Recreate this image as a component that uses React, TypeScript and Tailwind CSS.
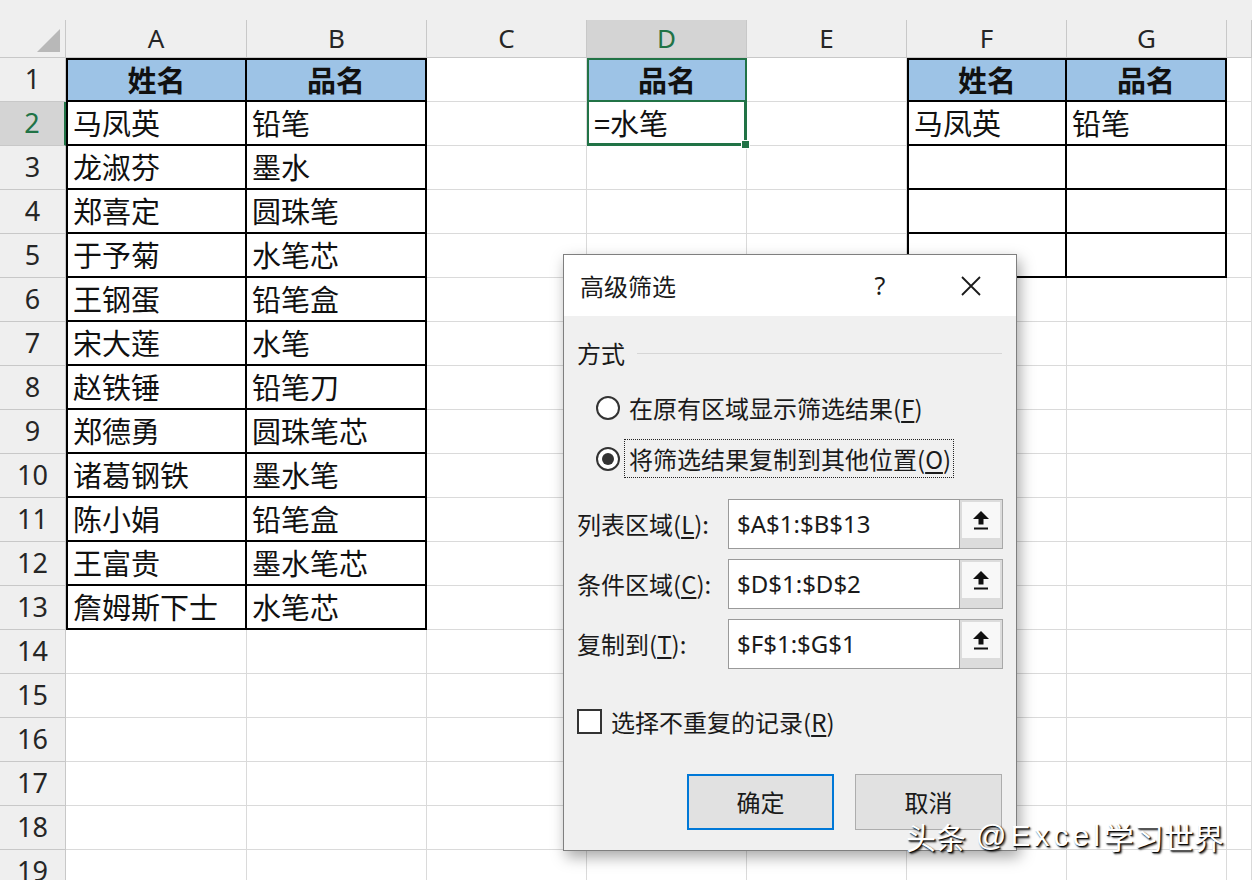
import React from 'react';

const names = ['马凤英', '龙淑芬', '郑喜定', '于予菊', '王钢蛋', '宋大莲', '赵铁锤', '郑德勇', '诸葛钢铁', '陈小娟', '王富贵', '詹姆斯下士'];
const items = ['铅笔', '墨水', '圆珠笔', '水笔芯', '铅笔盒', '水笔', '铅笔刀', '圆珠笔芯', '墨水笔', '铅笔盒', '墨水笔芯', '水笔芯'];
const LETTERS = ['A', 'B', 'C', 'D', 'E', 'F', 'G', 'H'];
const ROWS = Array.from({ length: 19 }, (_, i) => i + 1);

function getText(r: number, c: number): string {
  if (c === 0) {
    if (r === 1) return '姓名';
    if (r <= 13) return names[r - 2];
  }
  if (c === 1) {
    if (r === 1) return '品名';
    if (r <= 13) return items[r - 2];
  }
  if (c === 3) {
    if (r === 1) return '品名';
    if (r === 2) return '=水笔';
  }
  if (c === 5) {
    if (r === 1) return '姓名';
    if (r === 2) return '马凤英';
  }
  if (c === 6) {
    if (r === 1) return '品名';
    if (r === 2) return '铅笔';
  }
  return '';
}

function cellClass(r: number, c: number): string {
  const ab = r <= 13 && (c === 0 || c === 1);
  const fg = r <= 5 && (c === 5 || c === 6);
  if (c === 3 && r === 1) return 'border-2 border-[#217346] bg-[#9dc3e6]';
  if (c === 3 && r === 2) return 'border-l-2 border-r-[3px] border-b-[3px] border-[#217346] bg-white relative';
  if (ab || fg) {
    const left = c === 0 || c === 5;
    if (r === 1) {
      return left ? 'border-2 border-black bg-[#9dc3e6]' : 'border-t-2 border-r-2 border-b-2 border-black bg-[#9dc3e6]';
    }
    return left ? 'border-l-2 border-r-2 border-b-2 border-black bg-white' : 'border-r-2 border-b-2 border-black bg-white';
  }
  return 'border-r border-b border-[#dadada] bg-white';
}

function UploadIcon() {
  return (
    <svg width="18" height="21" viewBox="0 0 18 21">
      <polygon points="9,1 1,9 6.5,9 6.5,14.5 11.5,14.5 11.5,9 17,9" fill="#111" />
      <rect x="2" y="17.5" width="14" height="2" fill="#111" />
    </svg>
  );
}

function RangeRow({ label, acc, value }: { label: string; acc: string; value: string }) {
  return (
    <div className="flex items-center h-[50px]">
      <div className="w-[151px] text-[24px] text-[#1a1a1a]">
        {label}(<span className="underline underline-offset-[3px]">{acc}</span>):
      </div>
      <div className="flex h-full">
        <div className="w-[232px] h-full bg-white border border-[#9a9a9a] flex items-center pl-[8px] text-[24px] text-[#1a1a1a] font-['Noto_Sans',sans-serif]">
          {value}
        </div>
        <div className="w-[43px] h-full border border-l-0 border-[#a8a8a8] bg-[#dcdcdc] flex flex-col">
          <div className="h-[36px] mx-[2px] mt-[2px] bg-[#f8f8f8] flex items-center justify-center">
            <UploadIcon />
          </div>
        </div>
      </div>
    </div>
  );
}

function Dialog() {
  return (
    <div className="absolute left-[563px] top-[254px] w-[454px] h-[597px] border border-[#7f7f7f] bg-[#f0f0f0] shadow-[3px_6px_14px_rgba(0,0,0,0.35)] flex flex-col font-['Noto_Sans_CJK_SC',sans-serif] text-[#1a1a1a] z-20">
      <div className="h-[61px] bg-white flex items-center pl-[16px] pr-[34px]">
        <div className="text-[24px]">高级筛选</div>
        <div className="ml-auto w-[20px] text-center text-[25px] font-['Noto_Sans',sans-serif]">?</div>
        <div className="ml-[70px] w-[22px] h-[22px] flex items-center justify-center">
          <svg width="20" height="20" viewBox="0 0 20 20">
            <path d="M1 1 L19 19 M19 1 L1 19" stroke="#1a1a1a" strokeWidth="1.8" />
          </svg>
        </div>
      </div>
      <div className="flex flex-col px-[13px]">
        <div className="mt-[23px] h-[28px] flex items-center">
          <span className="text-[24px]">方式</span>
          <div className="flex-1 h-px bg-[#d6d6d6] ml-[12px] mr-[1px]" />
        </div>
        <div className="mt-[27px] h-[28px] flex items-center pl-[19px]">
          <div className="w-[24px] h-[24px] rounded-full border-2 border-[#333] bg-white" />
          <span className="ml-[9px] text-[24px]">
            在原有区域显示筛选结果(<span className="underline underline-offset-[3px]">F</span>)
          </span>
        </div>
        <div className="mt-[17px] h-[39px] flex items-center pl-[19px]">
          <div className="w-[24px] h-[24px] rounded-full border-2 border-[#333] bg-white flex items-center justify-center">
            <div className="w-[12px] h-[12px] rounded-full bg-[#333]" />
          </div>
          <div className="ml-[4px] h-full border border-dotted border-[#222] flex items-center pl-[4px] pr-[2px]">
            <span className="text-[24px]">
              将筛选结果复制到其他位置(<span className="underline underline-offset-[3px]">O</span>)
            </span>
          </div>
        </div>
        <div className="mt-[21px] flex flex-col gap-[10px]">
          <RangeRow label="列表区域" acc="L" value="$A$1:$B$13" />
          <RangeRow label="条件区域" acc="C" value="$D$1:$D$2" />
          <RangeRow label="复制到" acc="T" value="$F$1:$G$1" />
        </div>
        <div className="mt-[40px] h-[25px] flex items-center">
          <div className="w-[25px] h-[25px] border-2 border-[#333] bg-white" />
          <span className="ml-[9px] text-[24px]">
            选择不重复的记录(<span className="underline underline-offset-[3px]">R</span>)
          </span>
        </div>
        <div className="mt-[40px] flex justify-end gap-[21px] pr-[1px]">
          <div className="w-[147px] h-[56px] border-2 border-[#0078d7] bg-[#e1e1e1] flex items-center justify-center text-[24px]">
            确定
          </div>
          <div className="w-[147px] h-[56px] border border-[#adadad] bg-[#e1e1e1] flex items-center justify-center text-[24px]">
            取消
          </div>
        </div>
      </div>
    </div>
  );
}

export default function App() {
  return (
    <div className="relative w-[1252px] h-[880px] overflow-hidden bg-white">
      <div className="grid grid-cols-[66px_181px_180px_160px_160px_160px_160px_160px_1fr] grid-rows-[58px_repeat(19,44px)]">
        {/* corner */}
        <div className="bg-[#efefef] border-b border-[#c8c8c8] pt-[20px]">
          <div className="h-full border-r border-[#c8c8c8] relative">
            <svg width="66" height="38" viewBox="0 0 66 38" className="block">
              <polygon points="60,9 60,32 37,32" fill="#b8b8b8" />
            </svg>
          </div>
        </div>
        {LETTERS.map((l, i) => (
          <div key={l} className="bg-[#efefef] border-b border-[#c8c8c8] pt-[20px]">
            <div
              className={
                i === 3
                  ? 'h-full border-r border-[#c8c8c8] bg-[#d4d4d4] text-[#217346] flex items-center justify-center text-[26px] font-[\'Noto_Sans\',sans-serif]'
                  : 'h-full border-r border-[#c8c8c8] text-[#262626] flex items-center justify-center text-[26px] font-[\'Noto_Sans\',sans-serif]'
              }
            >
              {i < 7 ? l : ''}
            </div>
          </div>
        ))}
        {ROWS.map((r) => (
          <React.Fragment key={r}>
            <div
              className={
                r === 2
                  ? 'bg-[#d4d4d4] text-[#217346] border-r-2 border-r-[#217346] border-b border-b-[#c8c8c8] flex items-center justify-center text-[27px] font-[\'Noto_Sans\',sans-serif]'
                  : 'bg-[#efefef] text-[#262626] border-r border-b border-[#c8c8c8] flex items-center justify-center text-[27px] font-[\'Noto_Sans\',sans-serif]'
              }
            >
              {r}
            </div>
            {LETTERS.map((l, c) => {
              const t = getText(r, c);
              return (
                <div
                  key={l}
                  className={
                    cellClass(r, c) +
                    (r === 1
                      ? ' flex items-center justify-center font-bold text-[29px] text-[#111] font-[\'Noto_Sans_CJK_SC\',sans-serif]'
                      : ' flex items-center pl-[5px] text-[29px] text-[#111] font-[\'Noto_Sans_CJK_SC\',sans-serif]')
                  }
                >
                  {t}
                  {c === 3 && r === 2 && (
                    <div className="absolute -right-[6px] -bottom-[6px] w-[9px] h-[9px] bg-[#217346] border border-white z-10" />
                  )}
                </div>
              );
            })}
          </React.Fragment>
        ))}
      </div>
      <Dialog />
      <div className="absolute left-[906px] top-[821px] z-30 flex items-center leading-none text-white text-[30px] font-['Noto_Sans_CJK_SC',sans-serif] [text-shadow:1px_1px_1px_#000,2px_2px_2px_rgba(0,0,0,0.7)]">
        <span>头条</span>
        <span className="ml-[10px] tracking-[4px] font-['Liberation_Sans',sans-serif]">@Excel</span>
        <span>学习世界</span>
      </div>
    </div>
  );
}
